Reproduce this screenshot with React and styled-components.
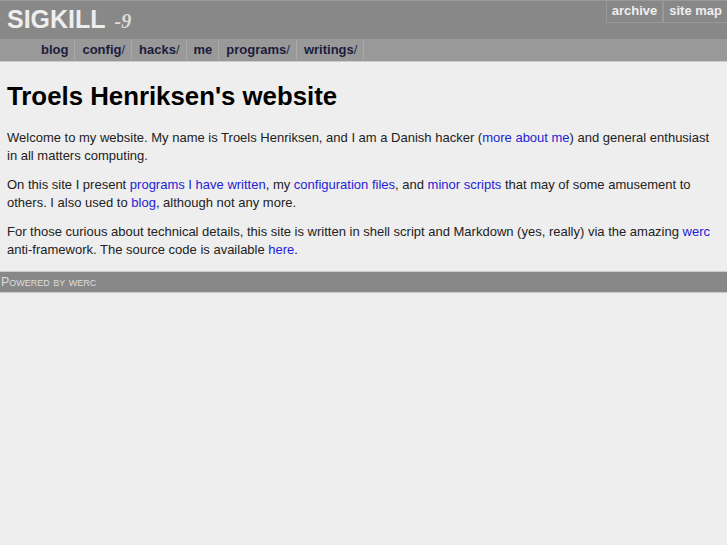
import React from "react";
import styled, { createGlobalStyle } from "styled-components";

const GlobalStyle = createGlobalStyle`
  html, body {
    margin: 0;
    padding: 0;
    background: #eeeeee;
  }
  body {
    font-family: "Liberation Sans", Arial, sans-serif;
    font-size: 13px;
    color: #222;
  }
`;

const Header = styled.header`
  background: #888;
  border-top: 1px solid #999;
  height: 38px;
  display: flex;
  justify-content: space-between;
  align-items: flex-start;
`;

const SiteTitle = styled.a`
  padding: 3px 0 0 7px;
  font-size: 25px;
  font-weight: bold;
  color: #eee;
  text-decoration: none;
  line-height: 30px;
`;

const SubTitle = styled.span`
  font-family: "Liberation Serif", "Times New Roman", serif;
  font-style: italic;
  font-weight: bold;
  font-size: 20px;
  color: #ddd;
  margin-left: 9px;
`;

const TopLinks = styled.nav`
  display: flex;
`;

const TopLink = styled.a`
  display: block;
  font-size: 13px;
  font-weight: bold;
  color: #eee;
  text-decoration: none;
  padding: 3px 5px 4px 5px;
  border: 1px solid #999;
  border-top: none;
  border-right: ${(p) => (p.last ? "none" : "1px solid #999")};
  margin-top: -1px;
`;

const NavBar = styled.nav`
  background: #999;
  height: 22px;
  border-bottom: 1px solid #ccc;
  display: flex;
  align-items: center;
  padding-left: 34px;
`;

const NavItem = styled.a`
  font-size: 13px;
  font-weight: bold;
  color: #1c1c3c;
  text-decoration: none;
  padding: 2px 6px 3px 7px;
  border-right: 1px solid #aaa;
`;

const Slash = styled.span`
  font-weight: normal;
  color: #2a2a4a;
`;

const Main = styled.main`
  padding: 0 14px 0 7px;
`;

const Title = styled.h1`
  font-size: 25.8px;
  font-weight: bold;
  color: #000;
  margin: 20px 0 19px 0;
  line-height: 28px;
`;

const Para = styled.p`
  margin: 0 0 11px 0;
  line-height: 18px;
`;

const Link = styled.a`
  color: #2323d6;
  text-decoration: none;
`;

const Footer = styled.footer`
  margin-top: 12px;
  background: #888;
  border-top: 1px solid #ccc;
  border-bottom: 1px solid #ccc;
  height: 20px;
  display: flex;
  align-items: center;
  padding-left: 1px;
  font-size: 12.4px;
  font-variant: small-caps;
  color: #ddd;
`;

const nav = [
  { name: "blog", dir: false },
  { name: "config", dir: true },
  { name: "hacks", dir: true },
  { name: "me", dir: false },
  { name: "programs", dir: true },
  { name: "writings", dir: true },
];

export default function App() {
  return (
    <>
      <GlobalStyle />
      <Header>
        <SiteTitle href="#">
          SIGKILL<SubTitle>-9</SubTitle>
        </SiteTitle>
        <TopLinks>
          <TopLink href="#">archive</TopLink>
          <TopLink href="#" last>
            site map
          </TopLink>
        </TopLinks>
      </Header>
      <NavBar>
        {nav.map((item) => (
          <NavItem href="#" key={item.name}>
            {item.name}
            {item.dir && <Slash>/</Slash>}
          </NavItem>
        ))}
      </NavBar>
      <Main>
        <Title>Troels Henriksen's website</Title>
        <Para>
          Welcome to my website. My name is Troels Henriksen, and I am a Danish
          hacker (<Link href="#">more about me</Link>) and general enthusiast
          in all matters computing.
        </Para>
        <Para>
          On this site I present <Link href="#">programs I have written</Link>,
          my <Link href="#">configuration files</Link>, and{" "}
          <Link href="#">minor scripts</Link> that may of some amusement to
          others. I also used to <Link href="#">blog</Link>, although not any
          more.
        </Para>
        <Para>
          For those curious about technical details, this site is written in
          shell script and Markdown (yes, really) via the amazing{" "}
          <Link href="#">werc</Link> anti-framework. The source code is
          available <Link href="#">here</Link>.
        </Para>
      </Main>
      <Footer>Powered by werc</Footer>
    </>
  );
}
